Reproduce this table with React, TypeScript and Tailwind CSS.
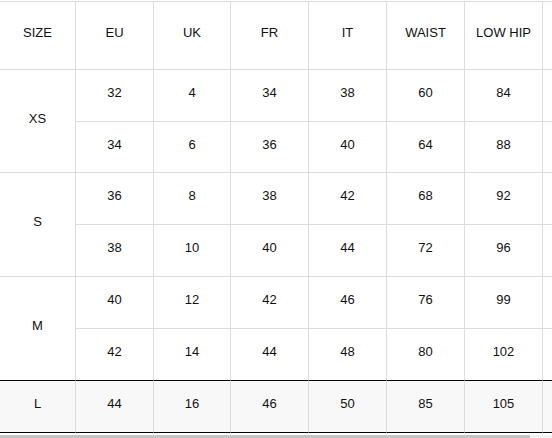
import React from "react";

const heads = ["SIZE", "EU", "UK", "FR", "IT", "WAIST", "LOW HIP", ""];

const groups = [
  {
    size: "XS",
    rows: [
      ["32", "4", "34", "38", "60", "84"],
      ["34", "6", "36", "40", "64", "88"],
    ],
  },
  {
    size: "S",
    rows: [
      ["36", "8", "38", "42", "68", "92"],
      ["38", "10", "40", "44", "72", "96"],
    ],
  },
  {
    size: "M",
    rows: [
      ["40", "12", "42", "46", "76", "99"],
      ["42", "14", "44", "48", "80", "102"],
    ],
  },
];

const last = ["44", "16", "46", "50", "85", "105"];

const cell = "flex items-center justify-center pb-[5px] border-r border-b border-[#dcdcdc]";

export default function App() {
  return (
    <div className="w-[552px] h-[438px] overflow-hidden bg-white pt-px font-['Liberation_Sans',Arial,sans-serif] text-[13px] text-[#111]">
      <div className="grid w-[700px] grid-cols-[76px_78px_77px_78px_78px_78px_78px_157px] grid-rows-[69px_52px_51px_52px_52px_52px_52px_52px]">
        {heads.map((h, i) => (
          <div key={`h-${i}`} className={`${cell} border-t`}>
            {h}
          </div>
        ))}

        {groups.map((g, gi) =>
          g.rows.map((r, ri) => (
            <React.Fragment key={`${gi}-${ri}`}>
              {ri === 0 && (
                <div
                  className={`${cell} row-span-2 ${
                    gi === groups.length - 1 ? "border-b-black" : ""
                  }`}
                >
                  {g.size}
                </div>
              )}
              {r.map((v, vi) => (
                <div
                  key={vi}
                  className={`${cell} ${
                    gi === groups.length - 1 && ri === 1 ? "border-b-black" : ""
                  }`}
                >
                  {v}
                </div>
              ))}
              <div
                className={`${cell} border-r-0 ${
                  gi === groups.length - 1 && ri === 1 ? "border-b-black" : ""
                }`}
              />
            </React.Fragment>
          ))
        )}

        <div className={`${cell} border-b-black bg-[#f8f8f8]`}>L</div>
        {last.map((v, i) => (
          <div key={`l-${i}`} className={`${cell} border-b-black bg-[#f8f8f8]`}>
            {v}
          </div>
        ))}
        <div className={`${cell} border-r-0 border-b-black bg-[#f8f8f8]`} />
      </div>

      <div className="mt-[2px] flex h-[6px] w-[552px] bg-[#f1f1f1]">
        <div className="h-full w-[530px] bg-[#c4c4c4]" />
      </div>
    </div>
  );
}
